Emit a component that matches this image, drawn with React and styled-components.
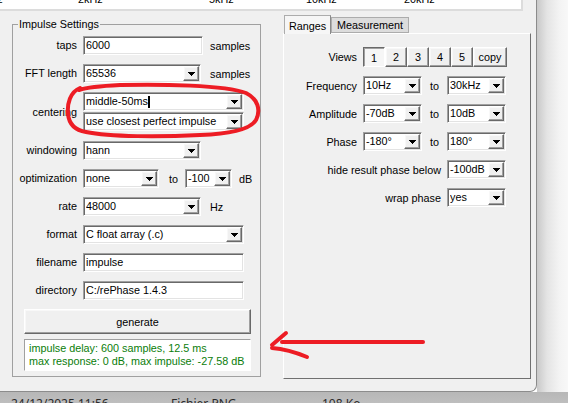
import React from "react";
import styled, { createGlobalStyle, css } from "styled-components";

const GlobalStyle = createGlobalStyle`
  html, body {
    margin: 0;
    padding: 0;
  }
  body {
    width: 568px;
    height: 403px;
    overflow: hidden;
    font-family: "Liberation Sans", Arial, sans-serif;
    font-size: 10.8px;
    color: #000;
  }
`;

const sunken = css`
  border: 1px solid;
  border-color: #a0a0a0 #fff #fff #a0a0a0;
  box-shadow: inset 1px 1px 0 #696969, inset -1px -1px 0 #e3e3e3;
`;

const raised = css`
  border: 1px solid;
  border-color: #fff #696969 #696969 #fff;
  box-shadow: inset -1px -1px 0 #a0a0a0, inset 1px 1px 0 #f8f8f8;
`;

const Desktop = styled.div`
  width: 568px;
  height: 403px;
  overflow: hidden;
  display: flex;
  flex-direction: column;
`;

const TopRow = styled.div`
  display: flex;
  height: 392px;
`;

const SideShadow = styled.div`
  flex: 1;
  background: linear-gradient(to right, #c9c9c9 0, #e4e4e4 10px, #f3f3f3 22px, #f8f8f8 100%);
`;

const FileRow = styled.div`
  flex: 1;
  display: flex;
  padding: 4px 0 0 11px;
  font-family: "Noto Sans", "Open Sans", sans-serif;
  font-size: 12px;
  line-height: 16px;
  color: #2a2a2a;
  white-space: nowrap;
  background: linear-gradient(to bottom, #b7b7b7, #c4c4c4);
`;

const FileCell = styled.span`
  width: ${(p) => p.$w}px;
`;

const Window = styled.div`
  position: relative;
  width: 537px;
  height: 392px;
  box-sizing: border-box;
  background: #f0f0f0;
  border-right: 1px solid #8c8c8c;
  border-bottom: 1px solid #8c8c8c;
  border-bottom-right-radius: 7px;
  display: flex;
  flex-direction: column;
`;

/* bottom edge of the response plot above the settings */
const Plot = styled.div`
  position: relative;
  overflow: hidden;
  width: 521px;
  height: 9px;
  background: #fff;
  border-right: 2px solid #dcdcdc;
  border-bottom: 2px solid #dcdcdc;
`;

const Tick = styled.span`
  position: absolute;
  top: -6px;
  left: ${(p) => p.$x}px;
  line-height: 11px;
  white-space: nowrap;
`;

const Body = styled.div`
  display: flex;
  align-items: flex-start;
  gap: 22px;
  padding-left: 12px;
`;

const GroupBox = styled.fieldset`
  margin: 6px 0 0;
  padding: 5px 0 5px;
  width: 249px;
  min-width: 0;
  box-sizing: border-box;
  border: 1px solid #a0a0a0;
`;

const Legend = styled.legend`
  margin-left: 5px;
  padding: 0 1px;
  line-height: 14px;
`;

const Form = styled.div`
  display: grid;
  grid-template-columns: 64px auto;
  column-gap: 6px;
  row-gap: 9px;
  align-items: center;
`;

const Label = styled.span`
  text-align: right;
  white-space: nowrap;
  line-height: 13px;
`;

const Field = styled.div`
  display: flex;
  flex-direction: ${(p) => (p.$stack ? "column" : "row")};
  align-items: ${(p) => (p.$stack ? "flex-start" : "center")};
  gap: ${(p) => (p.$stack ? 1 : 7)}px;
  margin-bottom: ${(p) => p.$after || 0}px;
`;

const Unit = styled.span`
  margin-left: ${(p) => p.$m || 0}px;
  white-space: nowrap;
`;

const Entry = styled.div`
  ${sunken};
  width: ${(p) => p.$w}px;
  height: 19px;
  box-sizing: border-box;
  background: #fff;
  padding-left: 2px;
  line-height: 17px;
  white-space: nowrap;
  overflow: hidden;
`;

const ComboBox = styled.div`
  ${sunken};
  width: ${(p) => p.$w}px;
  height: 19px;
  box-sizing: border-box;
  background: #fff;
  display: flex;
  align-items: center;
  padding: 1px 1px 1px 2px;
`;

const ComboText = styled.span`
  flex: 1;
  display: flex;
  align-items: center;
  white-space: nowrap;
  overflow: hidden;
  line-height: 15px;
`;

const Caret = styled.span`
  display: inline-block;
  width: 2px;
  height: 12px;
  background: #000;
`;

const DropButton = styled.span`
  ${raised};
  width: 16px;
  height: 15px;
  box-sizing: border-box;
  background: #f0f0f0;
  display: flex;
  align-items: center;
  justify-content: center;
  flex-shrink: 0;
`;

const Arrow = styled.svg`
  width: 7px;
  height: 4px;
  display: block;
  shape-rendering: crispEdges;
`;

const Footer = styled.div`
  display: flex;
  flex-direction: column;
  gap: 5px;
  margin-top: 9px;
  padding: 0 9px 0 11px;
`;

const PushButton = styled.div`
  ${raised};
  height: 25px;
  box-sizing: border-box;
  background: #f0f0f0;
  display: flex;
  align-items: center;
  justify-content: center;
`;

const Result = styled.div`
  height: 32px;
  box-sizing: border-box;
  border: 1px solid;
  border-color: #a0a0a0 #fff #fff #a0a0a0;
  background: #fff;
  color: #0a7d0a;
  padding: 2px 4px 0;
  line-height: 13px;
  white-space: nowrap;
`;

const Notebook = styled.div`
  margin-top: 4px;
  width: 248px;
  display: flex;
  flex-direction: column;
`;

const TabRow = styled.div`
  position: relative;
  z-index: 1;
  display: flex;
  align-items: flex-end;
  height: 19px;
  margin-bottom: -1px;
  padding-left: 1px;
`;

const Tab = styled.div`
  height: ${(p) => (p.$active ? 19 : 16)}px;
  width: ${(p) => p.$w}px;
  box-sizing: border-box;
  margin-bottom: ${(p) => (p.$active ? 0 : 1)}px;
  border: 1px solid #acacac;
  border-bottom: ${(p) => (p.$active ? "none" : "1px solid #acacac")};
  border-right-color: ${(p) => (p.$active ? "#8a8a8a" : "#acacac")};
  background: ${(p) => (p.$active ? "#f6f6f6" : "#dcdcdc")};
  display: flex;
  align-items: center;
  justify-content: center;
  padding-top: ${(p) => (p.$active ? 1 : 0)}px;
  white-space: nowrap;
`;

const Pane = styled.div`
  height: 346px;
  box-sizing: border-box;
  border: 1px solid;
  border-color: #fff #707070 #707070 #fff;
  padding: 13px 24px 0 0;
`;

const RangeGrid = styled.div`
  display: grid;
  grid-template-columns: 1fr 59px 25px 59px;
  row-gap: 9px;
  align-items: center;
`;

const RangeLabel = styled.span`
  grid-column: ${(p) => (p.$span ? "1 / 4" : "auto")};
  text-align: right;
  padding-right: 6px;
  white-space: nowrap;
`;

const ToText = styled.span`
  text-align: center;
`;

const ViewGroup = styled.div`
  grid-column: 2 / 5;
  display: flex;
  height: 20px;
`;

const ViewButton = styled.div`
  ${(p) =>
    p.$pressed
      ? css`
          border: 1px solid;
          border-color: #696969 #fff #fff #696969;
          box-shadow: inset 1px 1px 0 #a0a0a0;
          padding-top: 2px;
        `
      : raised};
  width: ${(p) => p.$w}px;
  flex-shrink: 0;
  height: 20px;
  box-sizing: border-box;
  background: ${(p) => (p.$pressed ? "#f6f6f6" : "#f0f0f0")};
  display: flex;
  align-items: center;
  justify-content: center;
`;

const Scribble = styled.svg`
  position: absolute;
  left: 0;
  top: 0;
  width: 537px;
  height: 392px;
  pointer-events: none;
  overflow: visible;
`;

function Combo({ w, value, caret }) {
  return (
    <ComboBox $w={w}>
      <ComboText>
        {value}
        {caret && <Caret />}
      </ComboText>
      <DropButton>
        <Arrow viewBox="0 0 7 4">
          <path d="M0 0h7v1H0zM1 1h5v1H1zM2 2h3v1H2zM3 3h1v1H3z" fill="#000" />
        </Arrow>
      </DropButton>
    </ComboBox>
  );
}

const ticks = [
  { x: -22, text: "1kHz" },
  { x: 78, text: "2kHz" },
  { x: 209, text: "5kHz" },
  { x: 306, text: "10kHz" },
  { x: 404, text: "20kHz" },
];

const ranges = [
  { label: "Frequency", from: "10Hz", to: "30kHz" },
  { label: "Amplitude", from: "-70dB", to: "10dB" },
  { label: "Phase", from: "-180°", to: "180°" },
];

export default function App() {
  return (
    <>
      <GlobalStyle />
      <Desktop>
        <TopRow>
          <Window>
            <Plot>
              {ticks.map((t) => (
                <Tick key={t.text} $x={t.x}>
                  {t.text}
                </Tick>
              ))}
            </Plot>

            <Body>
              <GroupBox>
                <Legend>Impulse Settings</Legend>
                <Form>
                  <Label>taps</Label>
                  <Field>
                    <Entry $w={120}>6000</Entry>
                    <Unit>samples</Unit>
                  </Field>

                  <Label>FFT length</Label>
                  <Field>
                    <Combo w={118} value="65536" />
                    <Unit $m={2}>samples</Unit>
                  </Field>

                  <Label>centering</Label>
                  <Field $stack $after={1}>
                    <Combo w={161} value="middle-50ms" caret />
                    <Combo w={161} value="use closest perfect impulse" />
                  </Field>

                  <Label>windowing</Label>
                  <Field>
                    <Combo w={118} value="hann" />
                  </Field>

                  <Label>optimization</Label>
                  <Field>
                    <Combo w={76} value="none" />
                    <Unit $m={3}>to</Unit>
                    <Combo w={47} value="-100" />
                    <Unit>dB</Unit>
                  </Field>

                  <Label>rate</Label>
                  <Field>
                    <Combo w={118} value="48000" />
                    <Unit $m={2}>Hz</Unit>
                  </Field>

                  <Label>format</Label>
                  <Field>
                    <Combo w={161} value="C float array (.c)" />
                  </Field>

                  <Label>filename</Label>
                  <Field>
                    <Entry $w={161}>impulse</Entry>
                  </Field>

                  <Label>directory</Label>
                  <Field>
                    <Entry $w={161}>C:/rePhase 1.4.3</Entry>
                  </Field>
                </Form>

                <Footer>
                  <PushButton>generate</PushButton>
                  <Result>
                    impulse delay: 600 samples, 12.5 ms
                    <br />
                    max response: 0 dB, max impulse: -27.58 dB
                  </Result>
                </Footer>
              </GroupBox>

              <Notebook>
                <TabRow>
                  <Tab $active $w={47}>
                    Ranges
                  </Tab>
                  <Tab $w={78}>Measurement</Tab>
                </TabRow>
                <Pane>
                  <RangeGrid>
                    <RangeLabel>Views</RangeLabel>
                    <ViewGroup>
                      {["1", "2", "3", "4", "5"].map((n) => (
                        <ViewButton key={n} $w={22} $pressed={n === "1"}>
                          {n}
                        </ViewButton>
                      ))}
                      <ViewButton $w={34}>copy</ViewButton>
                    </ViewGroup>

                    {ranges.map((r) => (
                      <React.Fragment key={r.label}>
                        <RangeLabel>{r.label}</RangeLabel>
                        <Combo w={59} value={r.from} />
                        <ToText>to</ToText>
                        <Combo w={59} value={r.to} />
                      </React.Fragment>
                    ))}

                    <RangeLabel $span>hide result phase below</RangeLabel>
                    <Combo w={59} value="-100dB" />

                    <RangeLabel $span>wrap phase</RangeLabel>
                    <Combo w={59} value="yes" />
                  </RangeGrid>
                </Pane>
              </Notebook>
            </Body>

            <Scribble viewBox="0 0 537 392">
              <g fill="none" stroke="#ed1c24" strokeWidth="4" strokeLinecap="round" strokeLinejoin="round">
                <path d="M80 88 C70 92 67 104 68 114 C69 124 74 130 86 132 C110 137 160 137 200 135 C230 134 250 130 256 120 C261 110 258 99 246 93 C225 85 160 84 120 85 C100 86 88 87 79 90" />
                <path d="M423 342 L282 342" />
                <path d="M286 333 L272 345" />
                <path d="M272 348 C285 349 295 352 307 357" />
              </g>
            </Scribble>
          </Window>
          <SideShadow />
        </TopRow>
        <FileRow>
          <FileCell $w={160}>24/12/2025 11:56</FileCell>
          <FileCell $w={151}>Fichier PNG</FileCell>
          <FileCell $w={80}>108 Ko</FileCell>
        </FileRow>
      </Desktop>
    </>
  );
}
